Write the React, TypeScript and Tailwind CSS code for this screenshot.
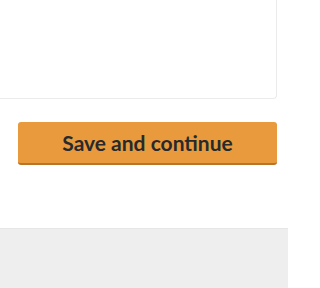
export default function App() {
  return (
    <div className="w-[288px] h-[288px] bg-white flex flex-col overflow-hidden" style={{ fontFamily: 'Lato, "Open Sans", sans-serif' }}>
      <div className="flex-1 flex flex-col">
        <div className="h-[99px] ml-[-10px] mr-[11px] border border-t-0 border-[#ebebeb] rounded-b-[4px] bg-white" />
        <div className="mt-[23px] ml-[18px] mr-[11px] h-[43px] rounded-[3px] bg-[#e99a3c] border-b-2 border-[#b8752a] flex items-center justify-center text-[21px] font-bold text-[#272a2d]">
          Save and continue
        </div>
      </div>
      <div className="h-[60px] shrink-0 bg-[#eeeeee] border-t border-[#e6e6e6]" />
    </div>
  );
}
